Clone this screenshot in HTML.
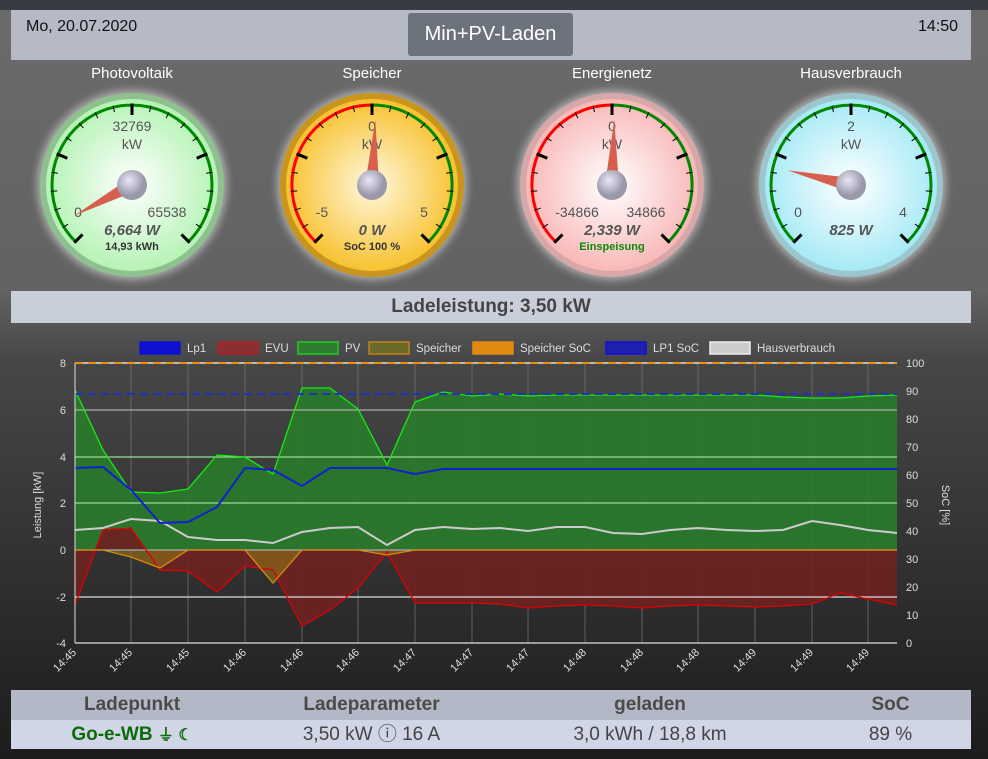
<!DOCTYPE html>
<html><head><meta charset="utf-8"><style>
body{margin:0;width:988px;height:759px;overflow:hidden;font-family:"Liberation Sans",sans-serif;background:linear-gradient(#6b6b6b 0px,#626262 290px,#474747 360px,#1c1c1c 759px);position:relative}
.top{position:absolute;left:0;top:0;width:988px;height:10px;background:#383b42}
.hdr{position:absolute;left:11px;top:10px;width:960px;height:50px;background:#b5bac6}
.date{position:absolute;left:26px;top:18px;font-size:16px;color:#111}
.time{position:absolute;right:30px;top:18px;font-size:16px;color:#111}
.btn{position:absolute;left:408px;top:13px;width:165px;height:43px;background:#6c737d;border-radius:3px;color:#fff;font-size:20px;text-align:center;line-height:43px}
.lade{position:absolute;left:11px;top:291px;width:960px;height:32px;background:#c9cedb;text-align:center;font-weight:bold;font-size:19px;color:#444;line-height:32px}
.tbl{position:absolute;left:11px;top:690px;width:960px}
.tr{display:flex;height:30px;line-height:30px;font-size:19px}
.tr div{text-align:center}
.h{background:#b3b8c6;font-weight:bold;color:#4a4a4a}
.r{background:#d0d6e6;color:#444;height:29px;line-height:29px}
</style></head><body>
<div class="top"></div>
<div class="hdr"></div>
<div class="date">Mo, 20.07.2020</div>
<div class="time">14:50</div>
<div class="btn">Min+PV-Laden</div>
<svg id="g" width="988" height="290" style="position:absolute;left:0;top:0" font-family="Liberation Sans, sans-serif"></svg>
<div class="lade">Ladeleistung: 3,50 kW</div>
<svg id="c" width="988" height="360" style="position:absolute;left:0;top:330px" font-family="Liberation Sans, sans-serif"></svg>
<div class="tbl">
<div class="tr h"><div style="width:242px">Ladepunkt</div><div style="width:237px">Ladeparameter</div><div style="width:320px">geladen</div><div style="width:161px">SoC</div></div>
<div class="tr r"><div style="width:242px;color:#0b6b0b;font-weight:bold">Go-e-WB <span style="font-size:16px">⏚ ☾</span></div><div style="width:237px">3,50 kW ⓘ 16 A</div><div style="width:320px">3,0 kWh / 18,8 km</div><div style="width:161px">89 %</div></div>
</div>
<script>
var g=document.getElementById('g'),s='';
s+='<defs>';
var cols=[['#8fc08f','#ffffff','#b6f3b6'],['#c9951c','#fff8e0','#f8c230'],['#d8a8a8','#ffffff','#f9b8b8'],['#9cc6ce','#ffffff','#a6eaf6']];
cols.forEach(function(c,i){s+='<radialGradient id="f'+i+'"><stop offset="0" stop-color="'+c[1]+'"/><stop offset="1" stop-color="'+c[2]+'"/></radialGradient>';});
s+='<radialGradient id="hub" cx="0.4" cy="0.35"><stop offset="0" stop-color="#e8e8f8"/><stop offset="1" stop-color="#9898a8"/></radialGradient><filter id="gl" x="-20%" y="-20%" width="140%" height="140%"><feGaussianBlur stdDeviation="4"/></filter></defs>';
var G=[{x:132,t:'Photovoltaik',top:'32769',l:'0',r:'65538',lx:-54,rx:35,v:'6,664 W',sub:'14,93 kWh',sc:'#333',a:-118,split:0},
{x:372,t:'Speicher',top:'0',l:'-5',r:'5',lx:-50,rx:52,v:'0 W',sub:'SoC 100 %',sc:'#333',a:3,split:1},
{x:612,t:'Energienetz',top:'0',l:'-34866',r:'34866',lx:-35,rx:34,v:'2,339 W',sub:'Einspeisung',sc:'#0a8a0a',a:2,split:1},
{x:851,t:'Hausverbrauch',top:'2',l:'0',r:'4',lx:-53,rx:52,v:'825 W',sub:'',sc:'#333',a:-77,split:0}];
function pt(cx,cy,r,a){var t=a*Math.PI/180;return [cx+r*Math.sin(t),cy-r*Math.cos(t)];}
function arc(cx,cy,r,a1,a2){var p=pt(cx,cy,r,a1),q=pt(cx,cy,r,a2);return 'M'+p[0].toFixed(1)+' '+p[1].toFixed(1)+' A'+r+' '+r+' 0 '+((a2-a1)>180?1:0)+' 1 '+q[0].toFixed(1)+' '+q[1].toFixed(1);}
G.forEach(function(o,i){var cx=o.x,cy=185;
s+='<text x="'+cx+'" y="78" fill="#fff" font-size="15" text-anchor="middle">'+o.t+'</text>';
s+='<circle cx="'+cx+'" cy="'+cy+'" r="95" fill="#ddd" opacity="0.6" filter="url(#gl)"/>';
s+='<circle cx="'+cx+'" cy="'+cy+'" r="92" fill="'+cols[i][0]+'"/>';
s+='<circle cx="'+cx+'" cy="'+cy+'" r="86" fill="url(#f'+i+')"/>';
if(o.split){s+='<path d="'+arc(cx,cy,80,-135,0)+'" stroke="#f00" stroke-width="3" fill="none"/><path d="'+arc(cx,cy,80,0,135)+'" stroke="#080" stroke-width="3" fill="none"/>';}
else s+='<path d="'+arc(cx,cy,80,-135,135)+'" stroke="#080" stroke-width="3" fill="none"/>';
for(var k=0;k<=20;k++){var a=-135+k*13.5;var maj=k%5==0;var p=pt(cx,cy,81.5,a),q=pt(cx,cy,maj?70:75,a);
s+='<line x1="'+p[0]+'" y1="'+p[1]+'" x2="'+q[0]+'" y2="'+q[1]+'" stroke="#000" stroke-width="'+(maj?3:1)+'"/>';}
s+='<text x="'+cx+'" y="'+(cy-54)+'" fill="#555" font-size="14" text-anchor="middle">'+o.top+'</text>';
s+='<text x="'+cx+'" y="'+(cy-36)+'" fill="#555" font-size="14" text-anchor="middle">kW</text>';
s+='<text x="'+(cx+o.lx)+'" y="'+(cy+32)+'" fill="#555" font-size="14" text-anchor="middle">'+o.l+'</text>';
s+='<text x="'+(cx+o.rx)+'" y="'+(cy+32)+'" fill="#555" font-size="14" text-anchor="middle">'+o.r+'</text>';
s+='<text x="'+cx+'" y="'+(cy+50)+'" fill="#555" font-size="15" font-weight="bold" font-style="italic" text-anchor="middle">'+o.v+'</text>';
s+='<text x="'+cx+'" y="'+(cy+65)+'" fill="'+o.sc+'" font-size="11" font-weight="bold" text-anchor="middle">'+o.sub+'</text>';
var tip=pt(cx,cy,65,o.a),b1=pt(cx,cy,7,o.a-90),b2=pt(cx,cy,7,o.a+90);
s+='<polygon points="'+tip+' '+b1+' '+b2+'" fill="#d6604d"/>';
s+='<circle cx="'+cx+'" cy="'+cy+'" r="15" fill="url(#hub)"/>';
});
g.innerHTML=s;
var c=document.getElementById('c'),h='';var Y=function(y){return y-330;};
var L=75,R=897;
function P(a){return a.map(function(p){return p[0]+','+Y(p[1]);}).join(' ');}
var leg=[[140,'Lp1','#1010d0','#1010d0'],[218,'EVU','#8a3030','#b02020'],[298,'PV','#2e7d2e','#22cc22'],[369,'Speicher','#6b6a28','#c08020'],[473,'Speicher SoC','#e08a10','#e08a10'],[606,'LP1 SoC','#2020b0','#1010d0'],[710,'Hausverbrauch','#ccc','#eee']];
leg.forEach(function(l){h+='<rect x="'+l[0]+'" y="12" width="40" height="12" fill="'+l[2]+'" stroke="'+l[3]+'" stroke-width="1.5"/><text x="'+(l[0]+47)+'" y="22" fill="#ddd" font-size="11.5">'+l[1]+'</text>';});
var xs=[75,131,188,245,302,358,415,472,528,585,642,698,755,812,868];
xs.forEach(function(x){h+='<line x1="'+x+'" y1="'+Y(363)+'" x2="'+x+'" y2="'+Y(643)+'" stroke="#777" stroke-width="1" opacity="0.7"/>';});
var PV=[[75,390],[103,450],[131,492],[160,493],[188,489],[217,455],[245,457],[273,474],[302,388],[330,388],[358,409],[387,465],[415,402],[443,392],[472,396],[500,394],[528,396],[557,395],[585,395],[642,395],[700,395],[755,395],[783,397],[812,398],[840,398],[868,396],[897,395]];
var EVU=[[75,605],[103,530],[131,528],[160,570],[188,571],[217,592],[245,566],[273,570],[302,626],[330,610],[358,588],[387,552],[415,603],[443,603],[472,603],[500,604],[528,608],[557,606],[585,605],[613,606],[642,608],[670,606],[698,605],[727,606],[755,607],[783,606],[812,604],[840,593],[868,599],[897,605]];
var SP=[[75,550],[103,550],[131,557],[160,568],[188,550],[217,550],[245,550],[273,583],[302,550],[358,550],[387,555],[415,550],[897,550]];
var LP=[[75,468],[103,467],[131,490],[160,523],[188,522],[217,507],[245,468],[273,470],[302,486],[330,468],[358,468],[387,468],[415,474],[443,469],[472,469],[897,469]];
var HV=[[75,530],[103,528],[131,519],[160,521],[188,537],[217,540],[245,540],[273,543],[302,532],[330,528],[358,527],[387,545],[415,530],[443,527],[472,529],[500,528],[528,531],[557,527],[585,527],[613,533],[642,534],[670,530],[698,528],[727,530],[755,531],[783,530],[812,521],[840,525],[868,530],[897,533]];
h+='<polygon points="75,'+Y(550)+' '+P(PV)+' 897,'+Y(550)+'" fill="#2a7a2a" opacity="0.92"/>';
h+='<polygon points="75,'+Y(550)+' '+P(EVU)+' 897,'+Y(550)+'" fill="#6e2222" opacity="0.92"/>';
h+='<polygon points="75,'+Y(550)+' '+P(SP)+' 897,'+Y(550)+'" fill="#8a6a18" opacity="0.7"/>';
[[363,'#fff','8'],[410,'#aaa','6'],[457,'#9d9','4'],[503,'#9d9','2'],[550,'#aaa','0'],[597,'#ddd','-2'],[643,'#ddd','-4']].forEach(function(r){h+='<line x1="'+L+'" y1="'+Y(r[0])+'" x2="'+R+'" y2="'+Y(r[0])+'" stroke="'+r[1]+'" stroke-width="1.2"/><text x="66" y="'+(Y(r[0])+4)+'" fill="#ddd" font-size="11" text-anchor="end">'+r[2]+'</text>';});
h+='<polyline points="'+P(PV)+'" fill="none" stroke="#1e1" stroke-width="1.3"/>';
h+='<polyline points="'+P(EVU)+'" fill="none" stroke="#d00" stroke-width="1.3"/>';
h+='<polyline points="'+P(SP)+'" fill="none" stroke="#d88a10" stroke-width="1.3"/>';
h+='<polyline points="'+P(HV)+'" fill="none" stroke="#ccc" stroke-width="2"/>';
h+='<polyline points="'+P(LP)+'" fill="none" stroke="#1020d0" stroke-width="2"/>';
h+='<line x1="75" y1="'+Y(394)+'" x2="897" y2="'+Y(394)+'" stroke="#2030c0" stroke-width="2" stroke-dasharray="8,5"/>';
h+='<line x1="75" y1="'+Y(363)+'" x2="897" y2="'+Y(363)+'" stroke="#f0900a" stroke-width="2" stroke-dasharray="8,5"/>';
h+='<line x1="75" y1="'+Y(363)+'" x2="75" y2="'+Y(643)+'" stroke="#ddd"/>';
for(var i=0;i<=10;i++){var yy=Y(643-i*28);h+='<text x="906" y="'+(yy+4)+'" fill="#ddd" font-size="11">'+(i*10)+'</text>';}
var lab=['14:45','14:45','14:45','14:46','14:46','14:46','14:47','14:47','14:47','14:48','14:48','14:48','14:49','14:49','14:49'];
xs.forEach(function(x,i){h+='<text transform="translate('+(x+2)+','+Y(653)+') rotate(-45)" fill="#ddd" font-size="11" text-anchor="end">'+lab[i]+'</text>';});
h+='<text transform="translate(41,'+Y(505)+') rotate(-90)" fill="#ddd" font-size="11" text-anchor="middle">Leistung [kW]</text>';
h+='<text transform="translate(942,'+Y(505)+') rotate(90)" fill="#ddd" font-size="11" text-anchor="middle">SoC [%]</text>';
c.innerHTML=h;
</script>
</body></html>
